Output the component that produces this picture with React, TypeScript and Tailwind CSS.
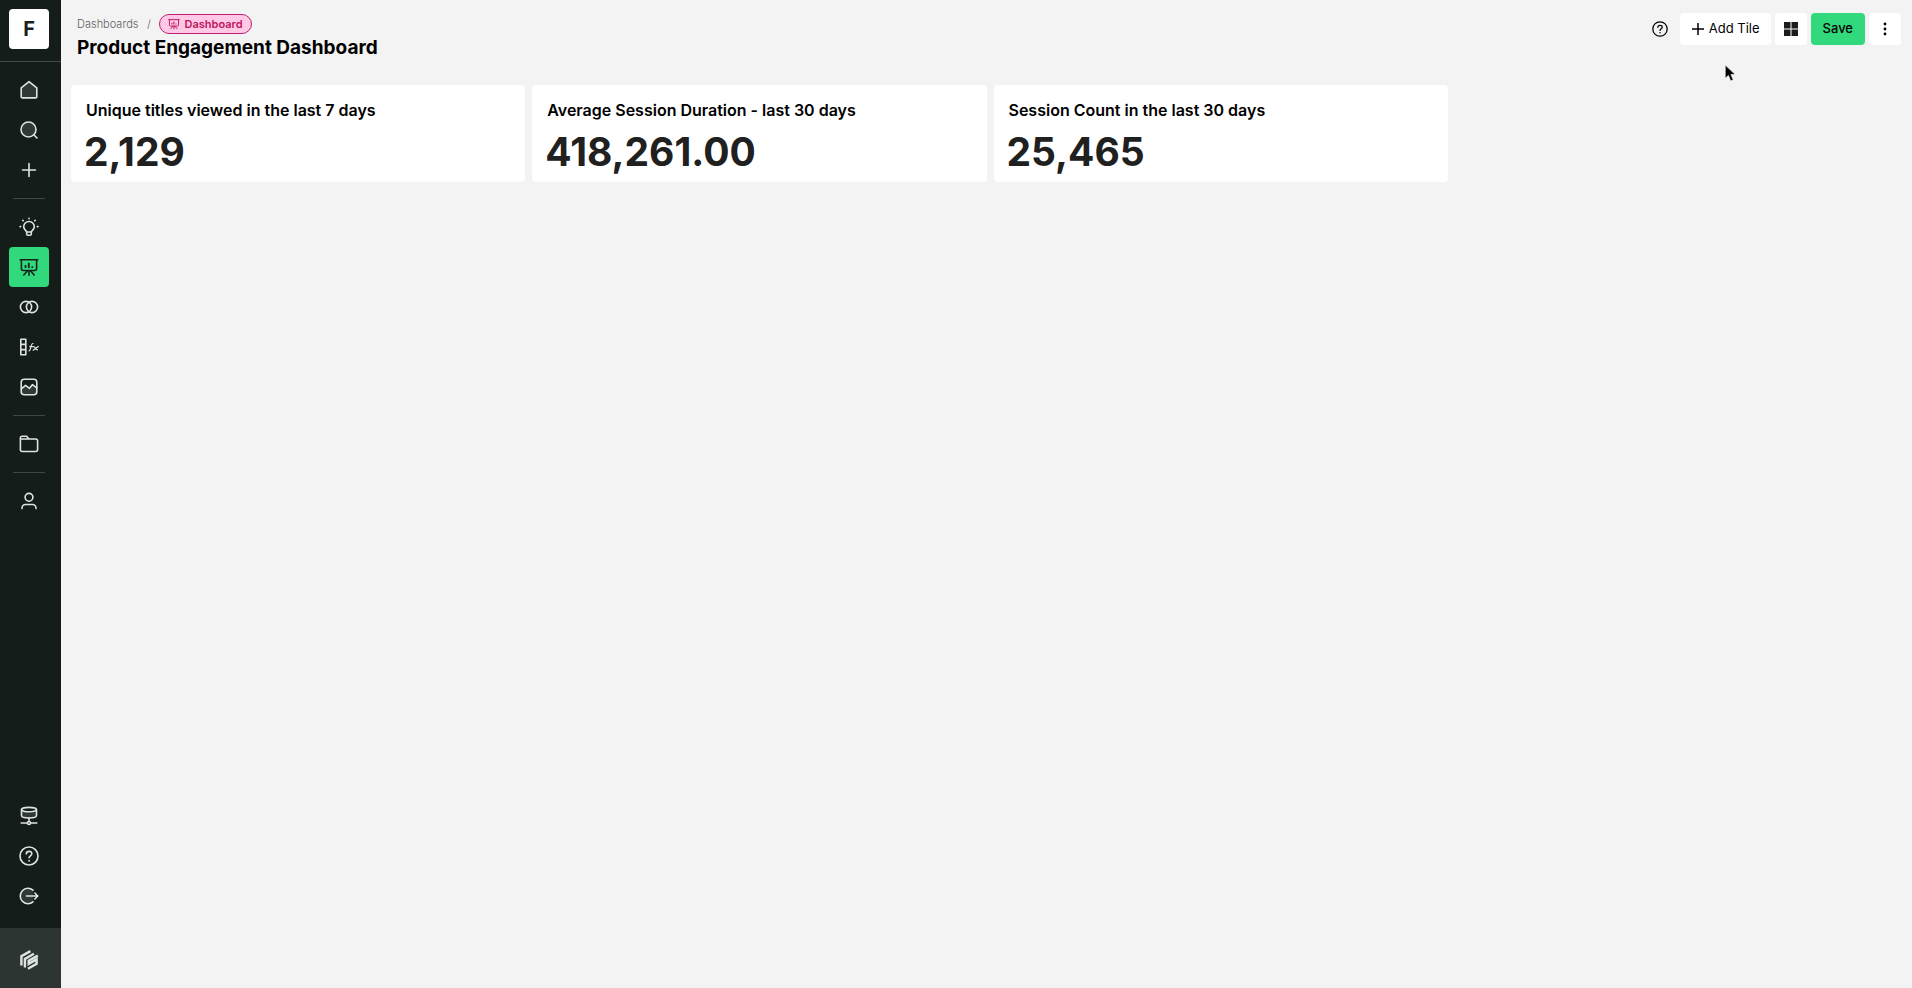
import React from 'react';

type IconProps = { children: React.ReactNode; size?: number };

function Icon({ children, size = 20 }: IconProps) {
  return (
    <svg
      width={size}
      height={size}
      viewBox="0 0 20 20"
      fill="none"
      stroke="currentColor"
      strokeWidth="1.6"
      strokeLinecap="round"
      strokeLinejoin="round"
      aria-hidden="true"
    >
      {children}
    </svg>
  );
}

const TINT = '#2f3a36';

const HomeIcon = () => (
  <Icon>
    <path d="M2.2 7.8 10 1.6l7.8 6.2v8.9a1.2 1.2 0 0 1-1.2 1.2H3.4a1.2 1.2 0 0 1-1.2-1.2z" fill={TINT} />
  </Icon>
);

const SearchIcon = () => (
  <Icon>
    <circle cx="9.5" cy="9.5" r="7.5" fill={TINT} />
    <path d="m15 15 3 3" />
  </Icon>
);

const PlusIcon = () => (
  <Icon>
    <path d="M10 3.5v13M3.5 10h13" />
  </Icon>
);

const BulbIcon = () => (
  <Icon>
    <path d="M7.7 15c0-1.1-3-2.2-3-5.2a5.3 5.3 0 0 1 10.6 0c0 3-3 4.100-3 5.200v1.900a1.300 1.300 0 0 1-1.300 1.300H9a1.300 1.300 0 0 1-1.300-1.300z" />
    <path d="M7.8 15h4.400M10 1.200v.5M3.800 3.400l.4.400M16.200 3.400l-.4.400M1 9.600h.700M18.300 9.600h.700" />
  </Icon>
);

const BoardIcon = ({ size = 20 }: { size?: number }) => (
  <Icon size={size}>
    <path d="M1.200 2.800h17.600M2.400 2.800v8.700a2 2 0 0 0 2 2h11.200a2 2 0 0 0 2-2V2.800M10 13.500v4.700M8.500 13.700 4.800 18M11.500 13.700l3.700 4.300" />
    <path d="M6.500 8v3M9.800 5.800V11M13.300 9.300V11" strokeWidth="1.8" strokeLinecap="butt" />
  </Icon>
);

const CirclesIcon = () => (
  <Icon>
    <circle cx="7" cy="10" r="5.6" />
    <circle cx="13" cy="10" r="5.6" />
  </Icon>
);

const FormulaIcon = () => (
  <Icon>
    <path d="M1.800 2.300h5v15.400h-5zM1.800 7.400h5M1.800 12.600h5" />
    <g strokeWidth="1.2">
      <path d="M10 13.800c2 .4 1.600-7.600 4-7.300M10.700 9.600h3.300" />
      <path d="M14.600 9.600c1.800-.3 1.600 3.800 4 3.200M19.200 9.400l-5 3.800" />
    </g>
  </Icon>
);

const ImageIcon = () => (
  <Icon>
    <path d="m2.300 11.800 4.200-3.500 4 3 3-3.700 4.200 3.300v4a3 3 0 0 1-3 3H5.300a3 3 0 0 1-3-3z" fill={TINT} stroke="none" />
    <rect x="2.200" y="2.200" width="15.600" height="15.600" rx="3" />
    <path d="m2.300 11.800 4.200-3.500 4 3 3-3.700 4.200 3.300" />
  </Icon>
);

const FolderIcon = () => (
  <Icon>
    <path d="M1.400 5V3.800a1.500 1.500 0 0 1 1.500-1.500h4.300a1.500 1.500 0 0 1 1.300.8L9.600 5h7a2 2 0 0 1 2 2v8.500a2 2 0 0 1-2 2H3.400a2 2 0 0 1-2-2zM1.400 5h8.200" />
  </Icon>
);

const UserIcon = () => (
  <Icon>
    <circle cx="10" cy="6.300" r="3.900" />
    <path d="M3 17.600v-.6a3.500 3.500 0 0 1 3.500-3.500h7a3.500 3.500 0 0 1 3.500 3.500v.6" />
  </Icon>
);

const DatabaseIcon = () => (
  <Icon>
    <path d="M2.500 3.800v6c0 3 15 3 15 0v-6z" fill={TINT} />
    <ellipse cx="10" cy="3.600" rx="7.500" ry="2.200" fill="#141d19" />
    <path d="M10 12v3.300M2.200 17h6.100M11.700 17h6.100" />
    <circle cx="10" cy="17" r="1.500" />
  </Icon>
);

const HelpIcon = ({ size = 20 }: { size?: number }) => (
  <Icon size={size}>
    <circle cx="10" cy="10" r="9" />
    <path d="M7.300 7.900c.2-3.400 5.600-3.300 5.500-.1 0 2-2.700 2-2.700 4" />
    <path d="M10.100 14.700v.1" strokeWidth="1.800" />
  </Icon>
);

const LogoutIcon = () => (
  <Icon>
    <path d="M14 4.200a7.700 7.700 0 1 0 0 11.600z" fill={TINT} stroke="none" />
    <path d="M14 4.200a7.700 7.700 0 1 0 0 11.600M7.500 10h11.200M15.800 7l3 3-3 3" />
  </Icon>
);

const BrandIcon = () => (
  <svg width="20" height="20" viewBox="0 0 20 20" fill="none" stroke="currentColor" strokeWidth="2.4" strokeLinejoin="miter" aria-hidden="true">
    <path d="M2.400 15.400V6.300L11.400 1.100M5.900 17.600V8.900l9-5.200" />
    <path d="M18.800 5.600 9.700 10.800v3.100l7.900-4.500v4.500L9 18.800" />
  </svg>
);

const NAV_GROUPS = [
  [
    { label: 'Home', icon: HomeIcon },
    { label: 'Search', icon: SearchIcon },
    { label: 'Create', icon: PlusIcon },
  ],
  [
    { label: 'Insights', icon: BulbIcon },
    { label: 'Dashboards', icon: BoardIcon, active: true },
    { label: 'Cohorts', icon: CirclesIcon },
    { label: 'Formulas', icon: FormulaIcon },
    { label: 'Gallery', icon: ImageIcon },
  ],
  [{ label: 'Files', icon: FolderIcon }],
  [{ label: 'Account', icon: UserIcon }],
];

const FOOTER_NAV = [
  { label: 'Data sources', icon: DatabaseIcon },
  { label: 'Help', icon: HelpIcon },
  { label: 'Log out', icon: LogoutIcon },
];

const TILES = [
  { title: 'Unique titles viewed in the last 7 days', value: '2,129' },
  { title: 'Average Session Duration - last 30 days', value: '418,261.00' },
  { title: 'Session Count in the last 30 days', value: '25,465' },
];

type NavItem = { label: string; icon: React.ComponentType; active?: boolean };

function NavLink({ label, icon: NavIcon, active }: NavItem) {
  return (
    <a
      href="#"
      aria-label={label}
      className={`flex size-10 items-center justify-center rounded ${active ? 'bg-[#31d97c] text-[#14241c]' : 'text-[#dfe3e1]'}`}
    >
      <NavIcon />
    </a>
  );
}

function Sidebar() {
  return (
    <aside className="flex w-[61px] shrink-0 flex-col bg-[#141d19]">
      <div className="border-b border-[#414946] pt-[9px] pb-3 pl-[9px]">
        <button className="size-10 rounded bg-white text-xl font-bold text-[#1c1f1e]">F</button>
      </div>
      <nav className="flex flex-1 flex-col pt-2 pl-[9px]">
        {NAV_GROUPS.map((group, i) => (
          <div key={i}>
            {i > 0 && <div className="mx-1 my-2 h-px w-8 bg-[#3f4744]" />}
            {group.map((item) => (
              <NavLink key={item.label} {...item} />
            ))}
          </div>
        ))}
        <div className="mt-auto pb-3">
          {FOOTER_NAV.map((item) => (
            <NavLink key={item.label} {...item} />
          ))}
        </div>
      </nav>
      <div className="flex h-15 items-center bg-[#2c3531] pt-1 pl-[19px] text-[#dfe3e1]">
        <BrandIcon />
      </div>
    </aside>
  );
}

function Header() {
  return (
    <header className="flex items-start justify-between pr-[11px] pl-4">
      <div className="pt-[14px]">
        <div className="flex items-center text-[11px]">
          <a href="#" className="font-light text-[#5f5f5f]">Dashboards</a>
          <span className="w-[21px] text-center font-light text-[#5f5f5f]">/</span>
          <span className="flex h-5 items-center gap-1 rounded-full border border-[#c01f72] bg-[#ffc9e6] px-2 font-semibold text-[#bd1560]">
            <BoardIcon size={12} />
            Dashboard
          </span>
        </div>
        <h1 className="text-[19px] leading-7 font-bold text-black">Product Engagement Dashboard</h1>
      </div>
      <div className="flex items-center gap-1 pt-[13px] text-[13px] text-black">
        <button aria-label="Help" className="flex size-8 items-center justify-center">
          <HelpIcon size={16} />
        </button>
        <button className="flex h-8 items-center gap-1 rounded bg-white px-[11px]">
          <svg width="14" height="14" viewBox="0 0 14 14" stroke="currentColor" strokeWidth="1.5" aria-hidden="true">
            <path d="M7 1v12M1 7h12" />
          </svg>
          Add Tile
        </button>
        <button aria-label="Layout" className="flex size-8 items-center justify-center rounded bg-white">
          <svg width="14" height="14" viewBox="0 0 14 14" fill="#1c1c1c" aria-hidden="true">
            <path d="M0 0h6.500v6.500H0zM7.500 0H14v6.500H7.500zM0 7.500h6.500V14H0zM7.500 7.500H14V14H7.500z" />
          </svg>
        </button>
        <button className="h-8 rounded bg-[#31d97c] px-3 font-medium">Save</button>
        <button aria-label="More" className="flex size-8 items-center justify-center rounded bg-white">
          <svg width="4" height="14" viewBox="0 0 4 14" aria-hidden="true">
            <circle cx="2" cy="2" r="1.4" />
            <circle cx="2" cy="7" r="1.4" />
            <circle cx="2" cy="12" r="1.4" />
          </svg>
        </button>
      </div>
    </header>
  );
}

export default function App() {
  return (
    <div className="relative flex min-h-screen bg-[#f3f3f3] font-['Inter',sans-serif]">
      <Sidebar />
      <main className="min-w-0 flex-1">
        <Header />
        <section className="mt-[23px] grid grid-cols-4 gap-[7px] pr-[3px] pl-[10px]">
          {TILES.map((tile) => (
            <article key={tile.title} className="rounded bg-white px-[13px] pt-[13px] pb-2">
              <h2 className="truncate pl-0.5 text-base leading-6 font-semibold text-black">{tile.title}</h2>
              <p className="mt-2 text-[39px] leading-11 font-bold text-[#202020]">{tile.value}</p>
            </article>
          ))}
        </section>
      </main>

      {/* Pointer */}
      <svg className="pointer-events-none absolute top-[64px] right-[175px]" width="13" height="19" viewBox="0 0 12 18" aria-hidden="true">
        <path d="M1 1v12.500l3-2.700 2.200 5.200 2.400-1-2.200-5H10.500z" fill="#000" stroke="#fff" strokeWidth=".6" />
      </svg>
    </div>
  );
}
